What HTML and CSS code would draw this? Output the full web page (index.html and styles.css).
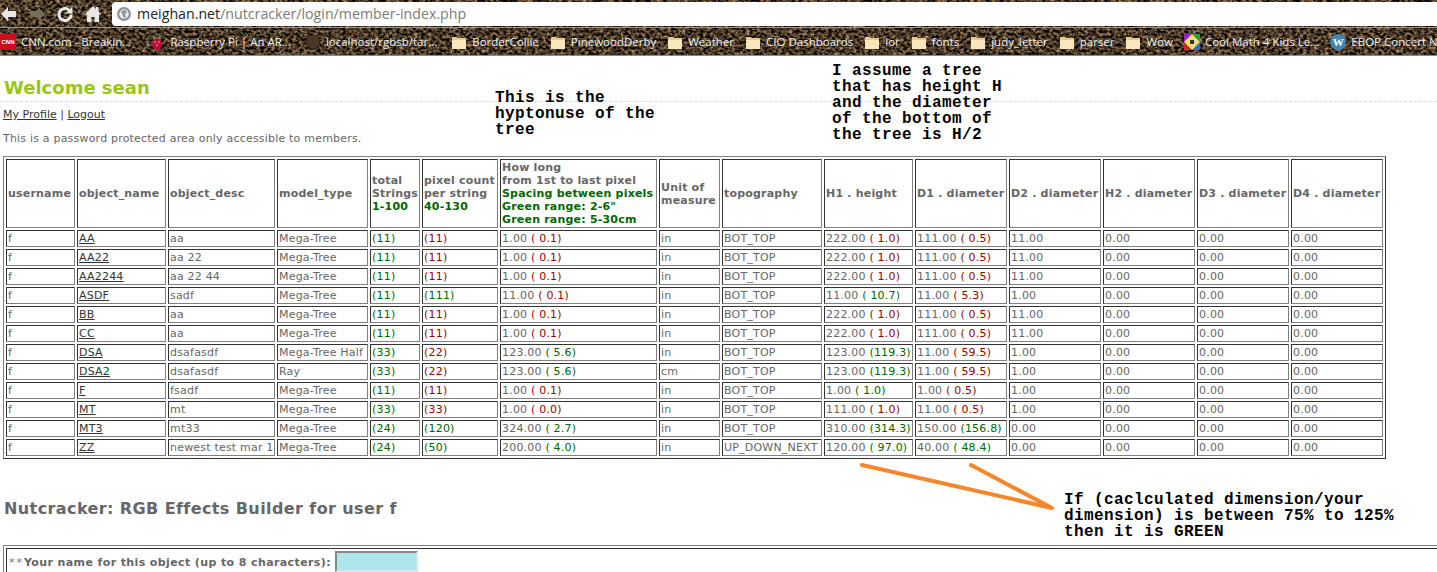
FILE: index.html
```html
<!DOCTYPE html>
<html lang="en">
	<head>
		<meta charset="UTF-8">
		<title>member-index</title>
		<link rel="stylesheet" href="styles.css">
	</head>
	<body>
		<div class="chrome">
			<svg class="texture" width="1437" height="56">
				<filter id="bark" x="0" y="0" width="100%" height="100%" color-interpolation-filters="sRGB">
					<feTurbulence type="fractalNoise" baseFrequency="0.28 0.36" numOctaves="3" seed="7"/>
					<feColorMatrix type="matrix" values="1.4 0 0 0 -0.42  1.1 0 0 0 -0.33  0.8 0 0 0 -0.25  0 0 0 0 1"/>
				</filter>
				<rect width="1437" height="56" filter="url(#bark)"/>
			</svg>
			<div class="toolbar">
				<svg class="tool" width="18" height="18" viewBox="0 0 18 18"><path d="M1 9l7-7v4h8v6H8v4z" fill="#e8e8e4"/></svg>
				<svg class="tool dim" width="18" height="18" viewBox="0 0 18 18"><path d="M17 9l-7-7v4H2v6h8v4z" fill="#7a6e58"/></svg>
				<svg class="tool" width="18" height="18" viewBox="0 0 18 18"><path d="M15 9.500a6 6 0 1 1-1.800-4.300" fill="none" stroke="#e8e8e4" stroke-width="3"/><path d="M16.500 1.500v7h-7z" fill="#e8e8e4"/></svg>
				<svg class="tool" width="18" height="18" viewBox="0 0 18 18"><path d="M9 1L0.500 9.500H3V17h4.500v-5h3v5H15V9.500h2.500L14.500 6.500V2H12v2z" fill="#e8e8e4"/></svg>
				<div class="omnibox">
					<svg width="16" height="16" viewBox="0 0 16 16"><circle cx="8" cy="8" r="7" fill="#8f9498"/><circle cx="8" cy="8" r="4.700" fill="#e8ebee"/><path d="M5 5l4-1 2 2-2 2 1 3-2 1-2-4z" fill="#8f9498"/></svg>
					<span class="host">meighan.net</span><span class="path">/nutcracker/login/member-index.php</span>
				</div>
			</div>
			<div class="bookmarks">
				<a class="bm wide"><span class="cnn">CNN</span><span class="bm-cnn">CNN.com - Breakin...</span></a>
				<a class="bm wide"><svg width="16" height="16" viewBox="0 0 16 16"><path d="M3 1l5 3 5-3-2 4H5z" fill="#5fae3a"/><ellipse cx="8" cy="10" rx="5" ry="6" fill="#b8123c"/><circle cx="6" cy="8" r="1" fill="#e8718c"/><circle cx="10" cy="8" r="1" fill="#e8718c"/><circle cx="8" cy="11" r="1" fill="#e8718c"/></svg><span>Raspberry Pi | An AR...</span></a>
				<a class="bm wide"><svg width="16" height="16" viewBox="0 0 16 16"><circle cx="8" cy="8" r="7" fill="#4a3826" stroke="#2a2016"/></svg><span>localhost/rgbsb/tar...</span></a>
				<a class="bm"><svg class="folder" viewBox="0 0 16 16"><use href="#fold"/></svg><span>BorderCollie</span></a>
				<a class="bm"><svg class="folder" viewBox="0 0 16 16"><use href="#fold"/></svg><span>PinewoodDerby</span></a>
				<a class="bm"><svg class="folder" viewBox="0 0 16 16"><use href="#fold"/></svg><span>Weather</span></a>
				<a class="bm"><svg class="folder" viewBox="0 0 16 16"><use href="#fold"/></svg><span>CIO Dashboards</span></a>
				<a class="bm"><svg class="folder" viewBox="0 0 16 16"><use href="#fold"/></svg><span>lor</span></a>
				<a class="bm"><svg class="folder" viewBox="0 0 16 16"><use href="#fold"/></svg><span>fonts</span></a>
				<a class="bm"><svg class="folder" viewBox="0 0 16 16"><use href="#fold"/></svg><span>judy_letter</span></a>
				<a class="bm"><svg class="folder" viewBox="0 0 16 16"><use href="#fold"/></svg><span>parser</span></a>
				<a class="bm"><svg class="folder" viewBox="0 0 16 16"><use href="#fold"/></svg><span>Wow</span></a>
				<a class="bm"><svg width="16" height="16" viewBox="0 0 16 16"><path d="M0 0h8L0 8z" fill="#a020c0"/><path d="M16 0H8l8 8z" fill="#30a030"/><path d="M0 16h8L0 8z" fill="#e02020"/><path d="M16 16H8l8-8z" fill="#2070d0"/><path d="M8 0l8 8-8 8-8-8z" fill="#f0e070"/><rect x="6" y="6" width="4" height="4" fill="#333"/></svg><span>Cool Math 4 Kids Le...</span></a>
				<a class="bm"><span class="wp">W</span><span>EBOP Concert N</span></a>
			</div>
			<svg class="defs" width="0" height="0"><defs><g id="fold"><path d="M1 3h5l1 1h8v11H1z" fill="#e9c98c"/><path d="M1 6h14v9H1z" fill="#f8e6bd"/></g></defs></svg>
		</div>

		<div class="page">
			<h1>Welcome sean</h1>
			<p class="links"><a href="#">My Profile</a> | <a href="#">Logout</a></p>
			<p class="note">This is a password protected area only accessible to members.</p>

			<table class="grid">
				<tr class="head">
					<th class="c1">username</th>
					<th class="c2">object_name</th>
					<th class="c3">object_desc</th>
					<th class="c4">model_type</th>
					<th class="c5">total<br>Strings<br><span class="range">1-100</span></th>
					<th class="c6">pixel count<br>per string<br><span class="range">40-130</span></th>
					<th class="c7">How long<br>from 1st to last pixel<br><span class="range">Spacing between pixels<br>Green range: 2-6"<br>Green range: 5-30cm</span></th>
					<th class="c8">Unit of<br>measure</th>
					<th class="c9">topography</th>
					<th class="c10">H1 . height</th>
					<th class="c11">D1 . diameter</th>
					<th class="c12">D2 . diameter</th>
					<th class="c13">H2 . diameter</th>
					<th class="c14">D3 . diameter</th>
					<th class="c15">D4 . diameter</th>
				</tr>
				<tr><td>f</td><td><a href="#">AA</a></td><td>aa</td><td>Mega-Tree</td><td class="ok">(11)</td><td class="bad">(11)</td><td>1.00 <span class="bad">( 0.1)</span></td><td>in</td><td>BOT_TOP</td><td>222.00 <span class="bad">( 1.0)</span></td><td>111.00 <span class="bad">( 0.5)</span></td><td>11.00</td><td>0.00</td><td>0.00</td><td>0.00</td></tr>
				<tr><td>f</td><td><a href="#">AA22</a></td><td>aa 22</td><td>Mega-Tree</td><td class="ok">(11)</td><td class="bad">(11)</td><td>1.00 <span class="bad">( 0.1)</span></td><td>in</td><td>BOT_TOP</td><td>222.00 <span class="bad">( 1.0)</span></td><td>111.00 <span class="bad">( 0.5)</span></td><td>11.00</td><td>0.00</td><td>0.00</td><td>0.00</td></tr>
				<tr><td>f</td><td><a href="#">AA2244</a></td><td>aa 22 44</td><td>Mega-Tree</td><td class="ok">(11)</td><td class="bad">(11)</td><td>1.00 <span class="bad">( 0.1)</span></td><td>in</td><td>BOT_TOP</td><td>222.00 <span class="bad">( 1.0)</span></td><td>111.00 <span class="bad">( 0.5)</span></td><td>11.00</td><td>0.00</td><td>0.00</td><td>0.00</td></tr>
				<tr><td>f</td><td><a href="#">ASDF</a></td><td>sadf</td><td>Mega-Tree</td><td class="ok">(11)</td><td class="ok">(111)</td><td>11.00 <span class="bad">( 0.1)</span></td><td>in</td><td>BOT_TOP</td><td>11.00 <span class="ok">( 10.7)</span></td><td>11.00 <span class="bad">( 5.3)</span></td><td>1.00</td><td>0.00</td><td>0.00</td><td>0.00</td></tr>
				<tr><td>f</td><td><a href="#">BB</a></td><td>aa</td><td>Mega-Tree</td><td class="ok">(11)</td><td class="bad">(11)</td><td>1.00 <span class="bad">( 0.1)</span></td><td>in</td><td>BOT_TOP</td><td>222.00 <span class="bad">( 1.0)</span></td><td>111.00 <span class="bad">( 0.5)</span></td><td>11.00</td><td>0.00</td><td>0.00</td><td>0.00</td></tr>
				<tr><td>f</td><td><a href="#">CC</a></td><td>aa</td><td>Mega-Tree</td><td class="ok">(11)</td><td class="bad">(11)</td><td>1.00 <span class="bad">( 0.1)</span></td><td>in</td><td>BOT_TOP</td><td>222.00 <span class="bad">( 1.0)</span></td><td>111.00 <span class="bad">( 0.5)</span></td><td>11.00</td><td>0.00</td><td>0.00</td><td>0.00</td></tr>
				<tr><td>f</td><td><a href="#">DSA</a></td><td>dsafasdf</td><td>Mega-Tree Half</td><td class="ok">(33)</td><td class="bad">(22)</td><td>123.00 <span class="ok">( 5.6)</span></td><td>in</td><td>BOT_TOP</td><td>123.00 <span class="ok">(119.3)</span></td><td>11.00 <span class="bad">( 59.5)</span></td><td>1.00</td><td>0.00</td><td>0.00</td><td>0.00</td></tr>
				<tr><td>f</td><td><a href="#">DSA2</a></td><td>dsafasdf</td><td>Ray</td><td class="ok">(33)</td><td class="bad">(22)</td><td>123.00 <span class="ok">( 5.6)</span></td><td>cm</td><td>BOT_TOP</td><td>123.00 <span class="ok">(119.3)</span></td><td>11.00 <span class="bad">( 59.5)</span></td><td>1.00</td><td>0.00</td><td>0.00</td><td>0.00</td></tr>
				<tr><td>f</td><td><a href="#">F</a></td><td>fsadf</td><td>Mega-Tree</td><td class="ok">(11)</td><td class="bad">(11)</td><td>1.00 <span class="bad">( 0.1)</span></td><td>in</td><td>BOT_TOP</td><td>1.00 <span class="ok">( 1.0)</span></td><td>1.00 <span class="bad">( 0.5)</span></td><td>1.00</td><td>0.00</td><td>0.00</td><td>0.00</td></tr>
				<tr><td>f</td><td><a href="#">MT</a></td><td>mt</td><td>Mega-Tree</td><td class="ok">(33)</td><td class="bad">(33)</td><td>1.00 <span class="bad">( 0.0)</span></td><td>in</td><td>BOT_TOP</td><td>111.00 <span class="bad">( 1.0)</span></td><td>11.00 <span class="bad">( 0.5)</span></td><td>1.00</td><td>0.00</td><td>0.00</td><td>0.00</td></tr>
				<tr><td>f</td><td><a href="#">MT3</a></td><td>mt33</td><td>Mega-Tree</td><td class="ok">(24)</td><td class="ok">(120)</td><td>324.00 <span class="ok">( 2.7)</span></td><td>in</td><td>BOT_TOP</td><td>310.00 <span class="ok">(314.3)</span></td><td>150.00 <span class="ok">(156.8)</span></td><td>0.00</td><td>0.00</td><td>0.00</td><td>0.00</td></tr>
				<tr><td>f</td><td><a href="#">ZZ</a></td><td>newest test mar 1</td><td>Mega-Tree</td><td class="ok">(24)</td><td class="ok">(50)</td><td>200.00 <span class="ok">( 4.0)</span></td><td>in</td><td>UP_DOWN_NEXT</td><td>120.00 <span class="ok">( 97.0)</span></td><td>40.00 <span class="ok">( 48.4)</span></td><td>0.00</td><td>0.00</td><td>0.00</td><td>0.00</td></tr>
			</table>

			<h2>Nutcracker: RGB Effects Builder for user f</h2>

			<table class="form">
				<tr>
					<td>
						<div class="name-row">
							<label><span class="star">**</span><b>Your name for this object (up to 8 characters):</b></label>
							<input type="text" class="name">
						</div>
					</td>
				</tr>
			</table>

			<!-- notes written over the screenshot -->
			<p class="scribble s1">This is the<br>hyptonuse of the<br>tree</p>
			<p class="scribble s2">I assume a tree<br>that has height H<br>and the diameter<br>of the bottom of<br>the tree is H/2</p>
			<p class="scribble s3">If (caclculated dimension/your<br>dimension) is between 75% to 125%<br>then it is GREEN</p>
			<svg class="arrow" width="200" height="50" viewBox="0 0 200 50">
				<path d="M3 3L193 46L112 3" fill="none" stroke="#f5862a" stroke-width="4" stroke-linecap="round" stroke-linejoin="round"/>
			</svg>
		</div>
	</body>
</html>
```

FILE: styles.css
```css
* { padding: 0; margin: 0; }
html, body { height: 572px; overflow: hidden; }
body { font: 11px "DejaVu Sans", Verdana, sans-serif; color: #666; background: #fff; }

/* browser bar */
.chrome { position: relative; height: 56px; overflow: hidden; background: #4a3826; }
.texture { position: absolute; left: 0; top: 0; }
.defs { position: absolute; }
.toolbar { position: relative; display: flex; align-items: center; height: 27px; }
.tool { margin-right: 10px; flex: none; }
.omnibox {
	display: flex; align-items: center; flex: 1; height: 24px; padding-left: 4px;
	background: #fff; border-radius: 4px 0 0 4px;
	font: 14.200px "Open Sans", sans-serif;
}
.omnibox svg { margin-right: 5px; }
.host { color: #222; }
.path { color: #7a7a7a; }
.bookmarks {
	position: relative; display: flex; align-items: center; gap: 11px; height: 29px; box-sizing: border-box;
	border-top: 1px solid #9a9488; border-bottom: 1px solid #8a8a86;
	font: 11.500px "Open Sans", sans-serif; color: #eee; white-space: nowrap; overflow: hidden;
}
.bm { display: flex; align-items: center; gap: 5px; flex: none; }
.bm.wide { margin-right: 3px; }
.bm svg { width: 16px; height: 16px; flex: none; }
.bm-cnn { margin-right: 4px; }
.cnn {
	width: 16px; height: 16px; background: #c8101a; color: #fff;
	font: bold 6px/16px "Liberation Sans", sans-serif; text-align: center;
}
.wp {
	width: 16px; height: 16px; border-radius: 50%; background: #3f86b4; color: #fff;
	font: bold 11px/16px "Liberation Serif", serif; text-align: center;
}

/* page */
.page { position: relative; padding-top: 21px; }
h1 {
	padding: 0 0 2px 4px; border-bottom: 1px dashed #ddd;
	font-size: 18px; line-height: 22px; color: #9bc31c;
}
.links { margin: 6px 0 0 3px; line-height: 14px; color: #444; }
.links a { color: #333; }
.note { margin: 10px 0 0 3px; line-height: 14px; letter-spacing: .2px; }

.grid, .form {
	margin-left: 3px; border: 1px solid; border-color: #808080 #333 #333 #808080;
	border-spacing: 2px; table-layout: fixed;
}
.grid { width: 1383px; margin-top: 10px; }
.grid th, .grid td, .form td {
	box-sizing: border-box; border: 1px solid; border-color: #333 #808080 #808080 #333;
	text-align: left; padding: 0 1px; overflow: hidden; white-space: nowrap;
}
.grid th { color: #666; line-height: 13px; height: 69px; letter-spacing: .2px; }
.grid td { height: 17px; line-height: 15px; letter-spacing: .2px; }
.grid a { color: #333; }
.range { color: #060; }
.ok { color: #060; }
.bad { color: #900; }

.c1 { width: 69px; }
.c2 { width: 89px; }
.c3 { width: 107px; }
.c4 { width: 91px; }
.c5 { width: 50px; }
.c6 { width: 76px; }
.c7 { width: 157px; }
.c8 { width: 61px; }
.c9 { width: 100px; }
.c10 { width: 89px; }
.c11, .c12, .c13, .c14, .c15 { width: 92px; }

h2 { margin: 40px 0 0 4px; font-size: 16px; line-height: 20px; color: #666; letter-spacing: .4px; }
.form { width: 1500px; margin-top: 26px; }
.form td { padding: 2px; height: 40px; vertical-align: top; letter-spacing: .39px; }
.name-row { display: flex; align-items: flex-start; gap: 4px; }
.name-row label { margin-top: 5px; line-height: 14px; }
.star { color: #777; letter-spacing: 2px; }
.name {
	width: 83px; height: 21px; box-sizing: border-box;
	background: #aee6ec; border: 2px solid; border-color: #888 #cfe9ec #cfe9ec #888;
}

/* the notes lie over the page */
.scribble {
	position: absolute; font: bold 16px/16px "Liberation Mono", monospace;
	letter-spacing: .4px; color: #000; white-space: nowrap;
}
.s1 { left: 495px; top: 34px; }
.s2 { left: 832px; top: 7px; }
.s3 { left: 1064px; top: 436px; }
.arrow { position: absolute; left: 859px; top: 406px; }
```
